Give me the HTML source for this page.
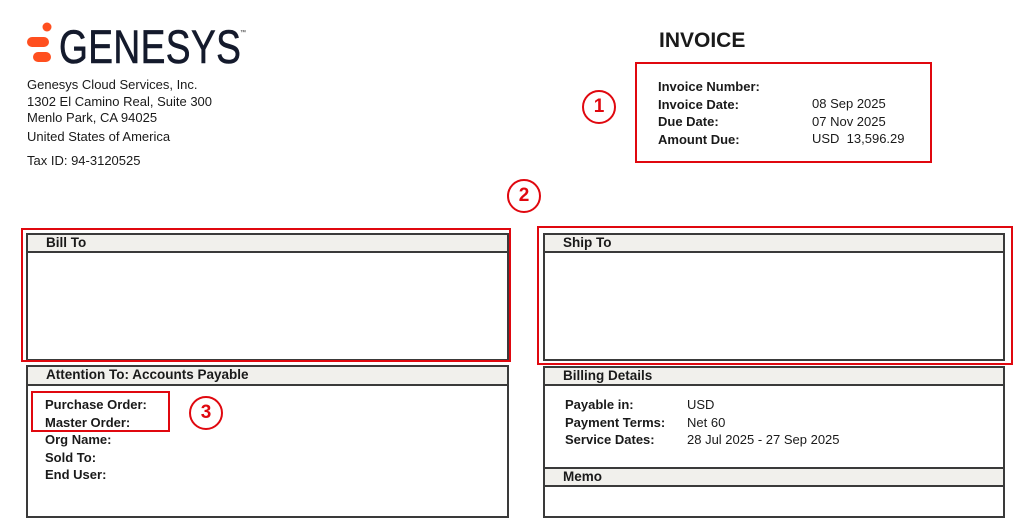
<!DOCTYPE html>
<html><head><style>
body{margin:0;width:1024px;height:531px;background:#fff;position:relative;overflow:hidden;font-family:"Liberation Sans",Arial,sans-serif;color:#1a1a1a}
.a{position:absolute}
.t{font-size:13px;line-height:16.5px}
.b{font-weight:bold}
.box{position:absolute;border:2px solid #3a3a3a;box-sizing:border-box}
.hd{position:absolute;background:#f1f0ec;border:2px solid #3a3a3a;box-sizing:border-box;font-weight:bold;font-size:13.5px;padding-left:18px;line-height:16px}
.red{position:absolute;border:2.5px solid #e0080f;box-sizing:border-box}
.c{position:absolute;width:34px;height:34px;border:2.5px solid #e0080f;border-radius:50%;box-sizing:border-box;color:#e0080f;font-weight:bold;font-size:19px;text-align:center;line-height:29px}
</style></head><body>
<svg class="a" style="left:25px;top:20px" width="30" height="45">
<circle cx="22" cy="7" r="4.5" fill="#ff4f1f"/>
<rect x="2" y="17" width="22" height="10" rx="5" fill="#ff4f1f"/>
<rect x="8" y="32" width="18" height="10" rx="5" fill="#ff4f1f"/>
</svg>
<div class="a" style="left:59px;top:22px;font-size:47px;line-height:50px;color:#141a2c;transform:scaleX(0.79);transform-origin:left top;letter-spacing:0.5px;-webkit-text-stroke:0.6px #141a2c">GENESYS</div>
<div class="a" style="left:240px;top:30px;font-size:6px">™</div>
<div class="a t" style="left:27px;top:77px">Genesys Cloud Services, Inc.<br>1302 El Camino Real, Suite 300<br>Menlo Park, CA 94025<br><span style="line-height:20px">United States of America</span></div>
<div class="a t" style="left:27px;top:153px">Tax ID: 94-3120525</div>

<div class="a b" style="left:659px;top:29px;font-size:21px">INVOICE</div>
<div class="red" style="left:635px;top:62px;width:297px;height:101px"></div>
<div class="a t b" style="left:658px;top:78px;line-height:17.5px">Invoice Number:<br>Invoice Date:<br>Due Date:<br>Amount Due:</div>
<div class="a t" style="left:812px;top:95px;line-height:17.5px">08 Sep 2025<br>07 Nov 2025<br>USD&nbsp;&nbsp;13,596.29</div>
<div class="c" style="left:582px;top:90px">1</div>
<div class="c" style="left:507px;top:179px">2</div>

<div class="box" style="left:26px;top:233px;width:483px;height:128px"></div>
<div class="hd" style="left:26px;top:233px;width:483px;height:20px">Bill To</div>
<div class="red" style="left:21px;top:228px;width:490px;height:134px"></div>

<div class="box" style="left:26px;top:365px;width:483px;height:153px"></div>
<div class="hd" style="left:26px;top:365px;width:483px;height:21px">Attention To: Accounts Payable</div>
<div class="a t b" style="left:45px;top:396px;line-height:17.5px">Purchase Order:<br>Master Order:<br>Org Name:<br>Sold To:<br>End User:</div>
<div class="red" style="left:31px;top:391px;width:139px;height:41px"></div>
<div class="c" style="left:189px;top:396px">3</div>

<div class="box" style="left:543px;top:233px;width:462px;height:128px"></div>
<div class="hd" style="left:543px;top:233px;width:462px;height:20px">Ship To</div>
<div class="red" style="left:537px;top:226px;width:476px;height:139px"></div>

<div class="box" style="left:543px;top:366px;width:462px;height:152px"></div>
<div class="hd" style="left:543px;top:366px;width:462px;height:20px">Billing Details</div>
<div class="a t b" style="left:565px;top:396px;line-height:17.5px">Payable in:<br>Payment Terms:<br>Service Dates:</div>
<div class="a t" style="left:687px;top:396px;line-height:17.5px">USD<br>Net 60<br>28 Jul 2025 - 27 Sep 2025</div>
<div class="hd" style="left:543px;top:467px;width:462px;height:20px">Memo</div>
</body></html>
